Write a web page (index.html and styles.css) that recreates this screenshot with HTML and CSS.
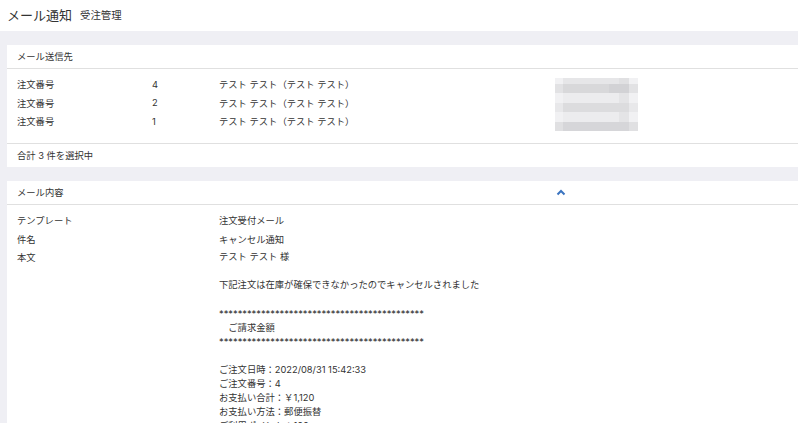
FILE: index.html
```html
<!DOCTYPE html>
<html lang="ja">
<head>
    <meta charset="UTF-8">
    <title>メール通知</title>
    <link rel="stylesheet" href="styles.css">
</head>
<body>
    <header class="page-header">
        <h1>メール通知</h1>
        <span class="sub-title">受注管理</span>
    </header>

    <main class="page-body">
        <section class="card">
            <div class="card-title">メール送信先</div>
            <div class="send-list">
                <div>注文番号</div><div>4</div><div>テスト テスト（テスト テスト）</div>
                <svg class="mosaic" width="83" height="53" viewBox="0 0 83 53">
                    <rect width="83" height="53" fill="#f1f1f3"/>
                    <rect x="8" width="56" height="6" fill="#e6e6e8"/>
                    <rect x="64" width="10" height="6" fill="#e0e0e2"/>
                    <rect y="6" width="83" height="9" fill="#e2e2e4"/>
                    <rect x="8" y="6" width="46" height="9" fill="#d8d8da"/>
                    <rect x="54" y="6" width="20" height="9" fill="#d2d2d5"/>
                    <rect x="8" y="15" width="56" height="10" fill="#ececee"/>
                    <rect x="64" y="15" width="10" height="10" fill="#e4e4e6"/>
                    <rect y="25" width="83" height="9" fill="#e8e8ea"/>
                    <rect x="8" y="25" width="66" height="9" fill="#dcdcde"/>
                    <rect x="8" y="34" width="56" height="10" fill="#ececee"/>
                    <rect x="64" y="34" width="10" height="10" fill="#e4e4e6"/>
                    <rect y="44" width="83" height="9" fill="#e0e0e2"/>
                    <rect x="8" y="44" width="66" height="9" fill="#d6d6d9"/>
                </svg>
                <div>注文番号</div><div>2</div><div>テスト テスト（テスト テスト）</div>
                <div>注文番号</div><div>1</div><div>テスト テスト（テスト テスト）</div>
            </div>
            <div class="card-footer">合計 3 件を選択中</div>
        </section>

        <section class="card">
            <div class="card-title">
                メール内容
                <svg class="chevron" width="10" height="7" viewBox="0 0 10 7">
                    <path d="M1.5 5.5 5 2l3.5 3.5" fill="none" stroke="#3b74c0" stroke-width="2"/>
                </svg>
            </div>
            <div class="mail-list">
                <div>テンプレート</div><div>注文受付メール</div>
                <div>件名</div><div>キャンセル通知</div>
                <div>本文</div>
                <div class="mail-text">テスト テスト 様

下記注文は在庫が確保できなかったのでキャンセルされました

********************************************
　ご請求金額
********************************************

ご注文日時：2022/08/31 15:42:33
ご注文番号：4
お支払い合計：￥1,120
お支払い方法：郵便振替
ご利用ポイント：100</div>
            </div>
        </section>
    </main>
</body>
</html>
```

FILE: styles.css
```css
html, body {
    margin: 0;
    height: 423px;
    overflow: hidden;
}
body {
    font-family: Inter, "Noto Sans CJK JP", sans-serif;
    font-size: 9.3px;
    color: #333;
    background-color: #efeff4;
}
.page-header {
    display: flex;
    align-items: center;
    height: 31px;
    padding-left: 7px;
    padding-bottom: 3px;
    box-sizing: border-box;
    background: #fff;
}
.page-header h1 {
    margin: 0 8px 0 0;
    font-size: 13px;
    font-weight: 400;
}
.sub-title {
    font-size: 10.4px;
}
.page-body {
    padding: 14px 0 0 7px;
}
.card {
    margin-bottom: 14px;
    background: #fff;
}
.card-title {
    position: relative;
    height: 23px;
    line-height: 23px;
    padding-left: 10px;
    border-bottom: 1px solid #e0e0e0;
}
.chevron {
    position: absolute;
    left: 549px;
    top: 8px;
}
.send-list {
    display: grid;
    grid-template-columns: 135px 67px 336px 1fr;
    grid-auto-rows: 18.6px;
    align-items: center;
    padding: 6px 0 12px 10px;
    height: 56px;
}
.mosaic {
    grid-column: 4;
    grid-row: 1 / span 3;
    align-self: start;
    margin-top: 3px;
}
.card-footer {
    height: 23px;
    line-height: 23px;
    padding-left: 10px;
    border-top: 1px solid #e0e0e0;
}
.mail-list {
    display: grid;
    grid-template-columns: 202px 1fr;
    grid-auto-rows: min-content;
    row-gap: 4.6px;
    padding: 8px 0 0 10px;
}
.mail-text {
    white-space: pre-wrap;
    line-height: 14.1px;
}
```
